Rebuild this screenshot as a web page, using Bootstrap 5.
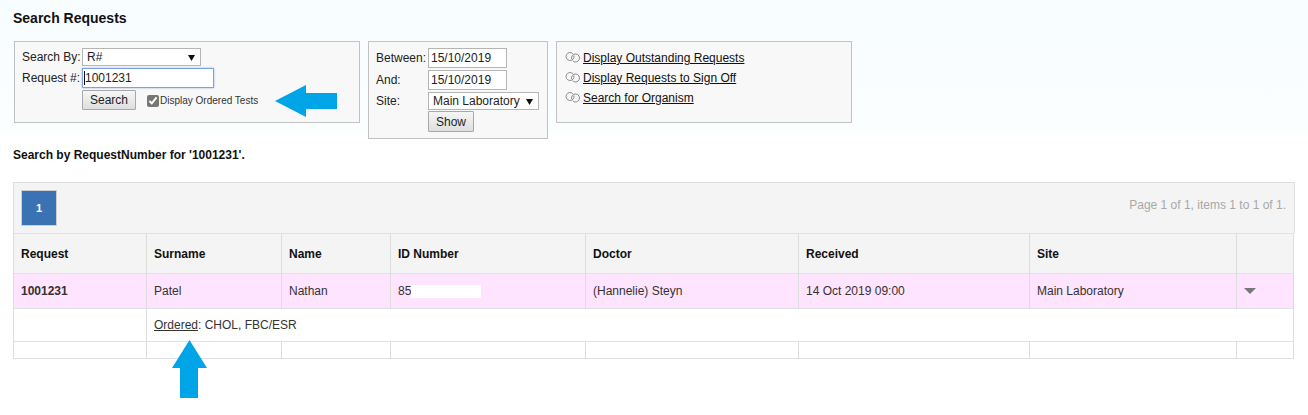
<!DOCTYPE html>
<html lang="en">
<head>
  <meta charset="UTF-8">
  <meta name="viewport" content="width=device-width, initial-scale=1.0">
  <title>Search Requests</title>
  <link rel="stylesheet" href="https://cdn.jsdelivr.net/npm/bootstrap@5.3.0/dist/css/bootstrap.min.css">
  <style>
    body {
      font-family: "Liberation Sans", Arial, sans-serif;
      font-size: 12px;
      line-height: 14px;
      color: #222;
      background: linear-gradient(#f8fdff, #fbfeff 130px, #fff 135px);
      min-height: 415px;
      position: relative;
    }
    .page-wrap { padding: 11px 13px 0 13px; }
    .page-title { font-size: 14px; font-weight: bold; color: #111; margin: 0 0 16px; line-height: 14px; }
    .panel-row { gap: 8px; align-items: flex-start; margin-left: 1px; }
    .filter-panel { background: #f8f8f8; border: 1px solid #c2c2c2; }
    .panel-search { width: 346px; height: 82px; padding: 6px 0 0 7px; }
    .panel-dates { width: 180px; height: 98px; padding: 6px 0 0 7px; }
    .panel-links { width: 296px; height: 82px; padding: 9px 0 0 8px; }
    .field-row { display: flex; align-items: center; margin-bottom: 2px; }
    .field-label { color: #222; }
    .panel-search .field-label { width: 60px; }
    .panel-dates .field-label { width: 52px; }
    .plain-select, .plain-input {
      font-family: "Liberation Sans", Arial, sans-serif;
      font-size: 12px;
      color: #222;
      background-color: #fff;
      border: 1px solid #b5b5b5;
      border-radius: 0;
      outline: none;
      padding: 0 4px;
    }
    .plain-select {
      appearance: none;
      background-image: url("data:image/svg+xml,%3Csvg xmlns='http://www.w3.org/2000/svg' width='7' height='7'%3E%3Cpath d='M0 1h7L3.5 7z' fill='%23111'/%3E%3C/svg%3E");
      background-repeat: no-repeat;
      background-position: right 5px center;
    }
    .select-by { width: 119px; height: 18px; }
    .input-request {
      width: 132px;
      height: 20px;
      border-color: #7da2e0;
      box-shadow: 0 0 2px #9db8ea;
      padding-left: 2px;
      background-image: linear-gradient(#111, #111);
      background-repeat: no-repeat;
      background-position: 1px center;
      background-size: 1px 14px;
    }
    .input-date { width: 79px; height: 20px; padding-left: 2px; }
    .select-site { width: 111px; height: 18px; }
    .action-btn {
      font-size: 12px;
      line-height: 14px;
      color: #222;
      padding: 2px 6px;
      border: 1px solid #a8a8a8;
      border-radius: 1px;
      background: linear-gradient(#f6f6f6, #dedede);
    }
    .btn-search { width: 54px; height: 20px; margin-left: 60px; }
    .btn-show { width: 46px; height: 21px; margin-left: 52px; margin-top: -1px; }
    .order-check { width: 12px; height: 12px; margin: 1px 1px 0 11px; accent-color: #777; }
    .order-label { font-size: 10px; color: #333; margin-top: 1px; }
    .link-row { display: flex; align-items: center; gap: 2px; margin-bottom: 6px; }
    .link-row a { color: #111; }
    .search-note { font-weight: bold; font-size: 12px; color: #111; margin: 9px 0 20px; line-height: 14px; }
    .results-head {
      height: 51px;
      background: #f4f4f4;
      border: 1px solid #ddd;
      border-bottom: 0;
      padding: 7px 7px 0 7px;
    }
    .page-current {
      width: 36px;
      height: 36px;
      background: #3a72b4;
      border: 1px solid #cfcfcf;
      color: #fff;
      font-size: 11px;
      font-weight: bold;
      display: flex;
      align-items: center;
      justify-content: center;
    }
    .page-info { color: #a8a8a8; font-size: 12px; margin-right: 1px; }
    .results-table { width: 1280px; table-layout: fixed; font-size: 12px; color: #333; }
    .results-table > :not(caption) > * > * { border-color: #ddd; padding: 0 7px; vertical-align: middle; background: transparent; box-shadow: none; color: #333; }
    .results-table th { font-weight: bold; color: #111 !important; }
    .head-row { height: 40px; background: #f4f4f4; }
    .data-row { height: 35px; background: #fee4fe; }
    .order-row { height: 33px; }
    .blank-row { height: 17px; }
    .results-table a { color: #333; }
    .w-req { width: 133px; }
    .w-sur { width: 135px; }
    .w-nam { width: 109px; }
    .w-idn { width: 195px; }
    .w-doc { width: 213px; }
    .w-rec { width: 231px; }
    .w-sit { width: 207px; }
    .w-act { width: 57px; }
    .id-blank { display: inline-block; width: 70px; height: 13px; background: #fff; vertical-align: middle; }
    .row-caret { display: inline-block; border-left: 6px solid transparent; border-right: 6px solid transparent; border-top: 6px solid #777; vertical-align: middle; position: relative; top: -1px; }
    .note-arrow { position: absolute; display: block; }
    .arrow-left { left: 275px; top: 85px; }
    .arrow-up { left: 172px; top: 340px; }
  </style>
</head>
<body>
  <div class="page-wrap">
    <h1 class="page-title">Search Requests</h1>

    <div class="d-flex panel-row">
      <div class="filter-panel panel-search">
        <div class="field-row">
          <label class="field-label">Search By:</label>
          <select class="plain-select select-by"><option>R#</option></select>
        </div>
        <div class="field-row">
          <label class="field-label">Request #:</label>
          <input class="plain-input input-request" type="text" value="1001231">
        </div>
        <div class="d-flex align-items-center">
          <button class="action-btn btn-search" type="button">Search</button>
          <input class="order-check" type="checkbox" checked>
          <span class="order-label">Display Ordered Tests</span>
        </div>
      </div>

      <div class="filter-panel panel-dates">
        <div class="field-row">
          <label class="field-label">Between:</label>
          <input class="plain-input input-date" type="text" value="15/10/2019">
        </div>
        <div class="field-row">
          <label class="field-label">And:</label>
          <input class="plain-input input-date" type="text" value="15/10/2019">
        </div>
        <div class="field-row">
          <label class="field-label">Site:</label>
          <select class="plain-select select-site"><option>Main Laboratory</option></select>
        </div>
        <button class="action-btn btn-show" type="button">Show</button>
      </div>

      <div class="filter-panel panel-links">
        <div class="link-row">
          <svg width="16" height="12" viewBox="0 0 16 12" fill="none" stroke="#8a8a8a"><path d="M8.88 3.53A4 4 0 1 1 7.88 1.72"/><path d="M6.62 6.99A4 4 0 1 1 7.64 8.79"/></svg>
          <a href="#">Display Outstanding Requests</a>
        </div>
        <div class="link-row">
          <svg width="16" height="12" viewBox="0 0 16 12" fill="none" stroke="#8a8a8a"><path d="M8.88 3.53A4 4 0 1 1 7.88 1.72"/><path d="M6.62 6.99A4 4 0 1 1 7.64 8.79"/></svg>
          <a href="#">Display Requests to Sign Off</a>
        </div>
        <div class="link-row">
          <svg width="16" height="12" viewBox="0 0 16 12" fill="none" stroke="#8a8a8a"><path d="M8.88 3.53A4 4 0 1 1 7.88 1.72"/><path d="M6.62 6.99A4 4 0 1 1 7.64 8.79"/></svg>
          <a href="#">Search for Organism</a>
        </div>
      </div>
    </div>

    <p class="search-note">Search by RequestNumber for '1001231'.</p>

    <div class="results-head d-flex justify-content-between">
      <div class="page-current">1</div>
      <div class="page-info mt-2">Page 1 of 1, items 1 to 1 of 1.</div>
    </div>
    <table class="table table-bordered mb-0 results-table">
      <colgroup>
        <col class="w-req"><col class="w-sur"><col class="w-nam"><col class="w-idn">
        <col class="w-doc"><col class="w-rec"><col class="w-sit"><col class="w-act">
      </colgroup>
      <thead>
        <tr class="head-row">
          <th>Request</th><th>Surname</th><th>Name</th><th>ID Number</th><th>Doctor</th><th>Received</th><th>Site</th><th></th>
        </tr>
      </thead>
      <tbody>
        <tr class="data-row">
          <td class="fw-bold">1001231</td>
          <td>Patel</td>
          <td>Nathan</td>
          <td>85<span class="id-blank"></span></td>
          <td>(Hannelie) Steyn</td>
          <td>14 Oct 2019 09:00</td>
          <td>Main Laboratory</td>
          <td><span class="row-caret"></span></td>
        </tr>
        <tr class="order-row">
          <td></td>
          <td colspan="7"><a href="#">Ordered</a>: CHOL, FBC/ESR</td>
        </tr>
        <tr class="blank-row">
          <td></td><td></td><td></td><td></td><td></td><td></td><td></td><td></td>
        </tr>
      </tbody>
    </table>
  </div>

  <svg class="note-arrow arrow-left" width="62" height="32" viewBox="0 0 62 32"><path d="M0 16 31 0V8H62V24H31V32Z" fill="#00a5e8"/></svg>
  <svg class="note-arrow arrow-up" width="35" height="58" viewBox="0 0 35 58"><path d="M17.500 0 35 28H26V58H8V28H0Z" fill="#00a5e8"/></svg>

  <script src="https://cdn.jsdelivr.net/npm/bootstrap@5.3.0/dist/js/bootstrap.bundle.min.js"></script>
</body>
</html>
